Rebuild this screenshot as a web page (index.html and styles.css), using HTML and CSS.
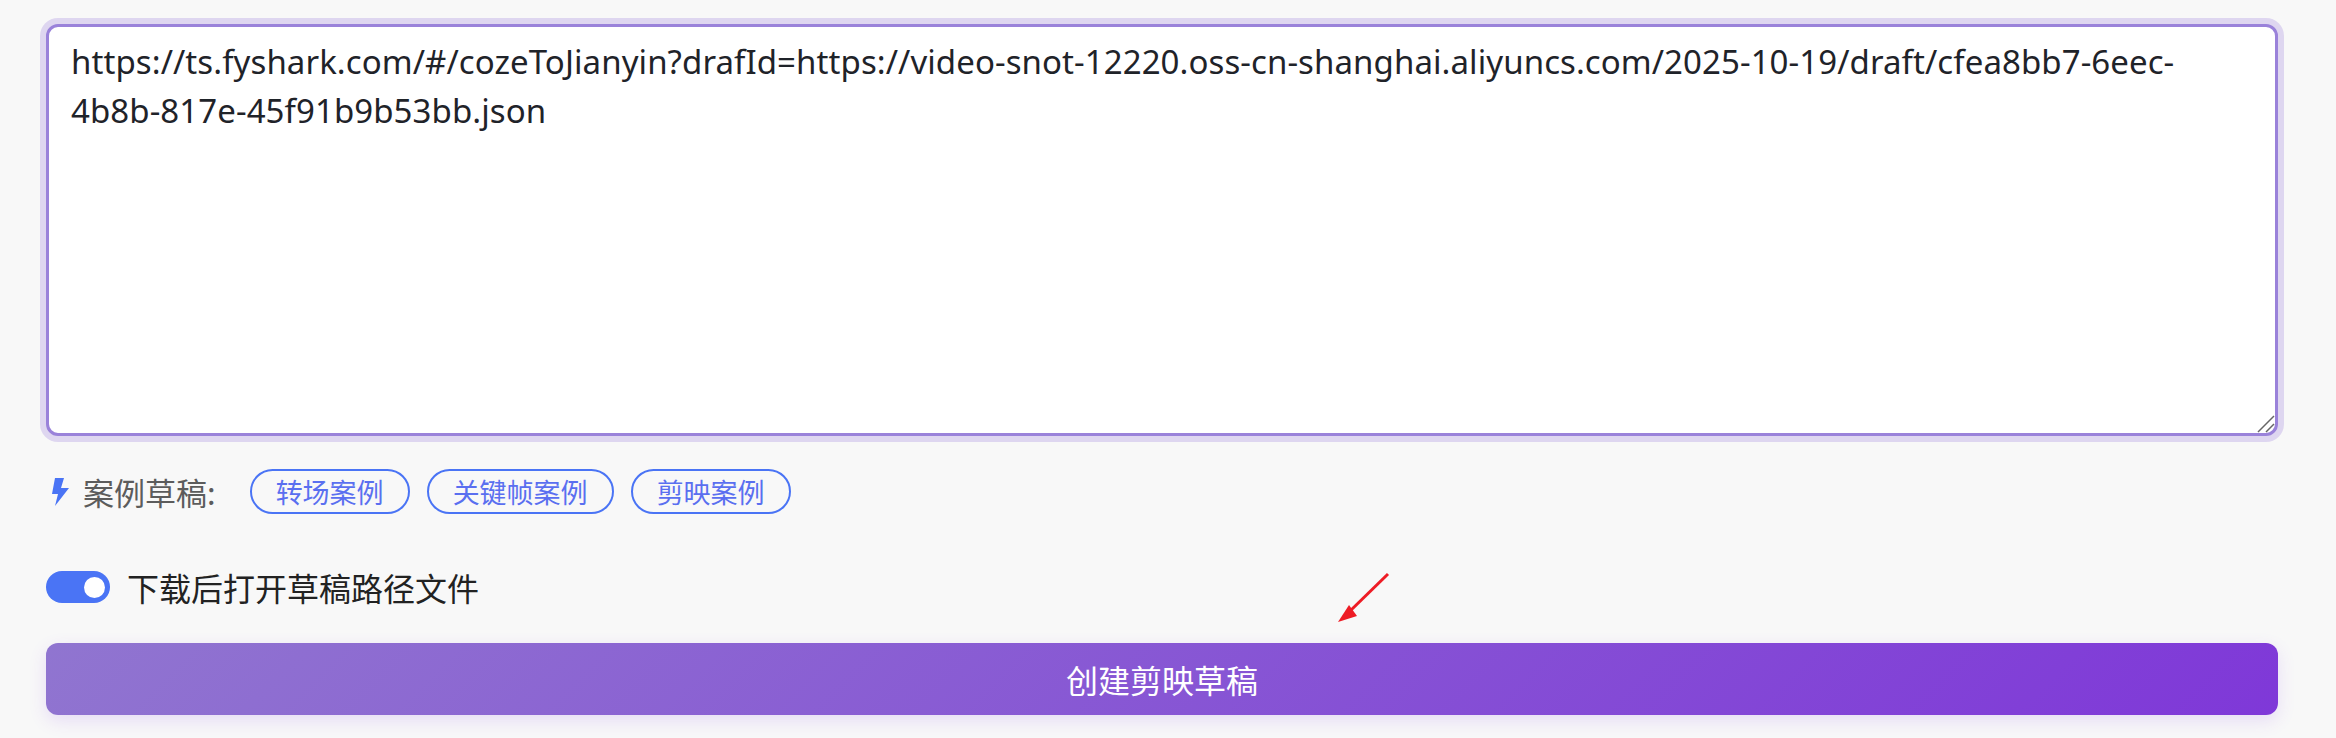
FILE: index.html
```html
<!DOCTYPE html>
<html>
<head>
    <title>创建剪映草稿</title>
    <link rel="stylesheet" href="styles.css">
</head>
<body>
    <div class="draft-form">
        <div class="input-wrap">
            <textarea class="draft-input" spellcheck="false">https://ts.fyshark.com/#/cozeToJianyin?drafId=https://video-snot-12220.oss-cn-shanghai.aliyuncs.com/2025-10-19/draft/cfea8bb7-6eec-4b8b-817e-45f91b9b53bb.json</textarea>
            <svg class="grip" width="18" height="18" viewBox="0 0 18 18">
                <path d="M17 1L1 17M17 9L9 17" stroke="#666" stroke-width="1.5" fill="none"/>
            </svg>
        </div>

        <div class="examples">
            <svg class="bolt" width="17" height="28" viewBox="0 0 17 28"><path d="M3 0H12L9 10H17L3 28L6 16H0Z"/></svg>
            <span class="examples-label">案例草稿:</span>
            <a class="tag">转场案例</a>
            <a class="tag">关键帧案例</a>
            <a class="tag">剪映案例</a>
        </div>

        <div class="open-row">
            <span class="toggle"><span class="knob"></span></span>
            <span class="open-label">下载后打开草稿路径文件</span>
        </div>

        <button class="create-button">创建剪映草稿</button>
    </div>

    <!-- annotation drawn over the screenshot -->
    <svg class="arrow" width="60" height="60" viewBox="0 0 60 60">
        <path d="M54 2L14 41" stroke="#ee1c25" stroke-width="3" fill="none"/>
        <path d="M4 50L15 33L23 44Z" fill="#ee1c25"/>
    </svg>
</body>
</html>
```

FILE: styles.css
```css
html, body {
    margin: 0;
    height: 100%;
}

body {
    background: #f8f8f8;
    font-family: "Noto Sans CJK SC", "Noto Sans", sans-serif;
    overflow: hidden;
    position: relative;
}

.draft-form {
    padding: 24px 58px 0 46px;
}

.input-wrap {
    position: relative;
}

.draft-input {
    display: block;
    box-sizing: border-box;
    width: 100%;
    height: 412px;
    padding: 10px 22px;
    border: 3px solid #9a82da;
    border-radius: 12px;
    box-shadow: 0 0 0 6px #ded6f0;
    outline: none;
    resize: none;
    background: #fff;
    color: #1f2329;
    font-family: "Noto Sans", sans-serif;
    font-size: 33px;
    line-height: 49px;
    letter-spacing: 0.08px;
}

.grip {
    position: absolute;
    right: 3px;
    bottom: 3px;
}

.examples {
    display: flex;
    align-items: center;
    height: 45px;
    margin-top: 33px;
}

.bolt {
    fill: #4a74f5;
    margin-left: 6px;
    margin-right: 14px;
}

.examples-label {
    color: #5c5c5c;
    font-size: 31px;
    margin-right: 34px;
}

.tag {
    display: flex;
    align-items: center;
    box-sizing: border-box;
    height: 45px;
    padding: 0 24px;
    margin-right: 17px;
    border: 2px solid #4a74f5;
    border-radius: 23px;
    color: #5a6ff0;
    font-size: 27px;
}

.open-row {
    display: flex;
    align-items: center;
    height: 32px;
    margin-top: 57px;
}

.toggle {
    display: flex;
    align-items: center;
    justify-content: flex-end;
    box-sizing: border-box;
    width: 64px;
    height: 32px;
    padding-right: 5px;
    border-radius: 16px;
    background: #4a74f5;
}

.knob {
    width: 21px;
    height: 21px;
    border-radius: 50%;
    background: #fff;
}

.open-label {
    margin-left: 17px;
    color: #222;
    font-size: 32px;
}

.create-button {
    display: block;
    width: 100%;
    height: 72px;
    margin-top: 40px;
    border: none;
    border-radius: 12px;
    background: linear-gradient(135deg, #9075d0 0%, #7f38d8 100%);
    box-shadow: 0 6px 18px rgba(124, 58, 237, 0.14);
    color: #fff;
    font-family: inherit;
    font-size: 32px;
}

.arrow {
    position: absolute;
    left: 1334px;
    top: 572px;
}
```
